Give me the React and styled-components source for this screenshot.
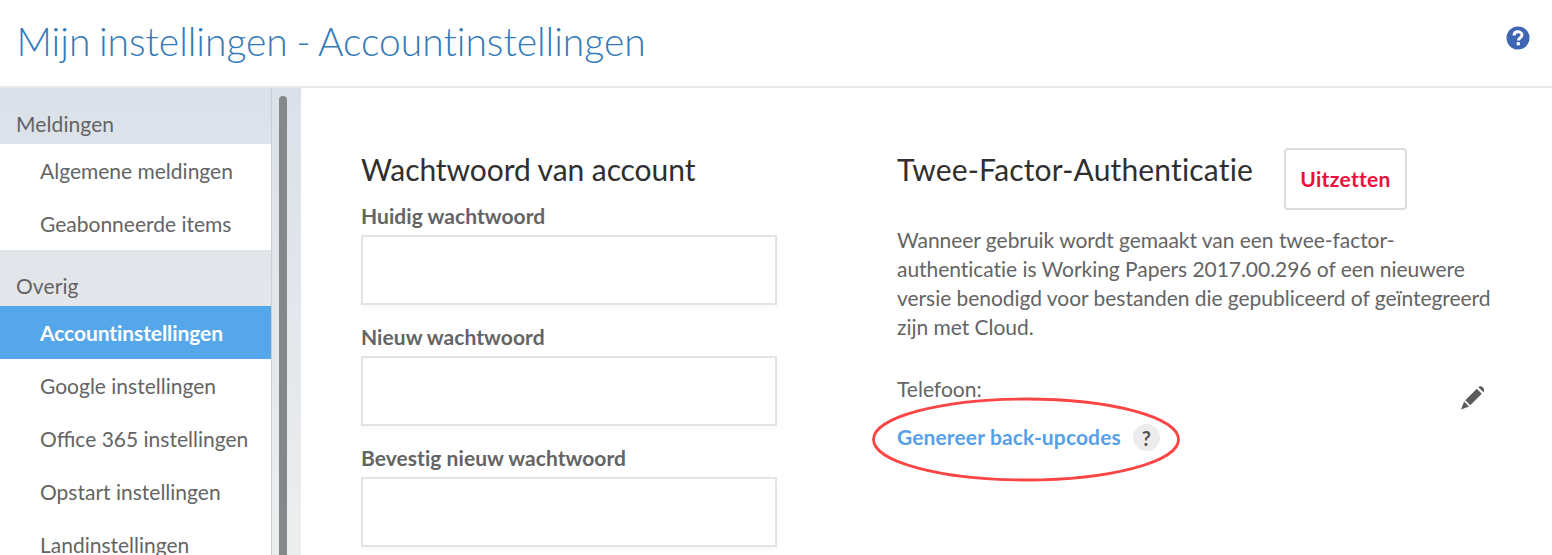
import React from "react";
import styled, { createGlobalStyle } from "styled-components";

const GlobalStyle = createGlobalStyle`
  * { box-sizing: border-box; }
  html, body { margin: 0; height: 100%; overflow: hidden; background: #fff; }
  body {
    font-family: Lato, "Open Sans", sans-serif;
    font-size: 21px;
    font-variant-ligatures: none;
    color: #646464;
  }
`;

const Page = styled.div`
  display: flex;
  flex-direction: column;
  height: 555px;
  overflow: hidden;
`;

const Header = styled.header`
  display: flex;
  flex: none;
  justify-content: space-between;
  align-items: flex-start;
  height: 88px;
  padding: 17px 22.5px 0 16.5px;
  border-bottom: 2px solid #e7e8e9;
`;

const Title = styled.h1`
  margin: 0;
  font-size: 39px;
  line-height: 48px;
  font-weight: 300;
  letter-spacing: -0.02px;
  word-spacing: -2px;
  color: #337ab7;
  white-space: nowrap;
`;

const HelpIcon = styled.svg`
  display: block;
  width: 24px;
  height: 24px;
  margin-top: 9px;
`;

const Body = styled.div`
  display: flex;
  flex: 1;
  min-height: 0;
`;

const Sidebar = styled.aside`
  display: flex;
  flex: none;
  width: 301px;
  overflow: hidden;
  background: linear-gradient(#dae1e9, #e4e7eb 50%, #eceeee);
`;

const Nav = styled.nav`
  width: 272px;
  flex: none;
  border-right: 1px solid #c9cfd6;
`;

const GroupTitle = styled.div`
  height: 56px;
  padding: 21px 16px 0;
  line-height: 30px;
  letter-spacing: 0.1px;
`;

const NavItem = styled.a`
  display: block;
  height: 53px;
  padding: 1px 0 0 40px;
  line-height: 51px;
  white-space: nowrap;
  background: ${(p) => (p.$active ? "#56a7e9" : "#fff")};
  color: ${(p) => (p.$active ? "#fff" : "#646464")};
  font-weight: ${(p) => (p.$active ? 700 : 400)};
  font-variant-ligatures: ${(p) => (p.$active ? "none" : "normal")};
  letter-spacing: ${(p) => (p.$active ? "-0.08px" : "0")};
`;

const ScrollThumb = styled.div`
  width: 8px;
  height: 600px;
  margin: 8px 0 0 7px;
  border-radius: 4px;
  background: #85888a;
`;

const Main = styled.main`
  display: flex;
  flex: 1;
  padding: 60px 0 0 60px;
`;

const PasswordForm = styled.section`
  width: 416px;
  margin-right: 120px;
  flex: none;
`;

const SectionTitle = styled.h2`
  margin: 0;
  font-size: 30px;
  line-height: 42px;
  font-weight: 400;
  letter-spacing: ${(p) => p.$tracking};
  color: #2f2f2f;
  white-space: nowrap;
`;

const Field = styled.label`
  display: block;
  height: 121px;
  font-weight: 700;
  letter-spacing: 0.05px;
`;

const FieldLabel = styled.span`
  display: block;
  height: 35px;
  line-height: 32px;
`;

const Input = styled.input`
  display: block;
  width: 416px;
  height: 70px;
  padding: 0 16px;
  border: 2px solid #e3e3e3;
  background: #fff;
  box-shadow: 0 3px 5px rgba(0, 0, 0, 0.03);
  font: inherit;
`;

const FieldList = styled.div`
  padding-top: 10px;
`;

const TwoFactor = styled.section`
  width: 600px;
  flex: none;
`;

const TitleRow = styled.div`
  display: flex;
  align-items: flex-start;
  justify-content: space-between;
  width: 510px;
`;

const OffButton = styled.button`
  width: 123px;
  height: 62px;
  padding: 0 0 2px;
  border: 2px solid #dcdcdc;
  border-radius: 4px;
  background: #fff;
  color: #ec0f3c;
  font: 700 21px Lato, sans-serif;
  letter-spacing: 0.3px;
`;

const Description = styled.p`
  margin: 15px 0 0;
  line-height: 29px;
  letter-spacing: -0.04px;
  white-space: nowrap;
`;

const PhoneRow = styled.div`
  display: flex;
  justify-content: space-between;
  margin-top: 33px;
  padding-right: 10px;
  line-height: 29px;
`;

const PencilIcon = styled.svg`
  display: block;
  width: 28px;
  height: 28px;
  margin-top: 10px;
`;

const BackupRow = styled.div`
  position: relative;
  display: flex;
  align-items: center;
  gap: 12px;
  height: 28px;
  margin-top: 11px;
`;

const BackupLink = styled.a`
  color: #56a0e8;
  font-weight: 700;
  line-height: 28px;
  letter-spacing: 0.12px;
  white-space: nowrap;
`;

const Hint = styled.span`
  width: 27px;
  height: 27px;
  border-radius: 50%;
  background: #ececec;
  color: #555;
  font-weight: 700;
  font-size: 20px;
  line-height: 28px;
  text-align: center;
`;

const Highlight = styled.svg`
  position: absolute;
  left: -26px;
  top: -28px;
  width: 312px;
  height: 88px;
  pointer-events: none;
`;

const groups = [
  { title: "Meldingen", items: ["Algemene meldingen", "Geabonneerde items"] },
  {
    title: "Overig",
    items: [
      "Accountinstellingen",
      "Google instellingen",
      "Office 365 instellingen",
      "Opstart instellingen",
      "Landinstellingen",
    ],
  },
];

const fields = ["Huidig wachtwoord", "Nieuw wachtwoord", "Bevestig nieuw wachtwoord"];

export default function App() {
  return (
    <Page>
      <GlobalStyle />
      <Header>
        <Title>Mijn instellingen - Accountinstellingen</Title>
        <HelpIcon viewBox="0 0 24 24" aria-label="Help">
          <circle cx="12" cy="12" r="11.5" fill="#3f66b3" />
          <path d="M8 9.4C8 4.6 16 4.7 16 9c0 2.8-3.7 2.9-3.7 5.6" fill="none" stroke="#fff" strokeWidth="2.9" />
          <rect x="10.7" y="16.2" width="3.2" height="3.1" fill="#fff" />
        </HelpIcon>
      </Header>
      <Body>
        <Sidebar>
          <Nav>
            {groups.map((g) => (
              <React.Fragment key={g.title}>
                <GroupTitle>{g.title}</GroupTitle>
                {g.items.map((item) => (
                  <NavItem key={item} $active={item === "Accountinstellingen"}>
                    {item}
                  </NavItem>
                ))}
              </React.Fragment>
            ))}
          </Nav>
          <ScrollThumb />
        </Sidebar>
        <Main>
          <PasswordForm>
            <SectionTitle $tracking="-0.07px">Wachtwoord van account</SectionTitle>
            <FieldList>
              {fields.map((f) => (
                <Field key={f}>
                  <FieldLabel>{f}</FieldLabel>
                  <Input type="password" />
                </Field>
              ))}
            </FieldList>
          </PasswordForm>
          <TwoFactor>
            <TitleRow>
              <SectionTitle $tracking="0.17px">Twee-Factor-Authenticatie</SectionTitle>
              <OffButton>Uitzetten</OffButton>
            </TitleRow>
            <Description>
              Wanneer gebruik wordt gemaakt van een twee-factor-
              <br />
              authenticatie is Working Papers 2017.00.296 of een nieuwere
              <br />
              versie benodigd voor bestanden die gepubliceerd of geïntegreerd
              <br />
              zijn met Cloud.
            </Description>
            <PhoneRow>
              <span>Telefoon:</span>
              <PencilIcon viewBox="0 0 28 28" aria-label="Bewerken">
                <path d="M2 25.5l3.1-8.1 5 5zM6.3 16.2L17.8 4.8l5 5-11.5 11.4zM19.4 3.2c2.8-2.8 7.6 2 5 5z" fill="#5c5c5c" />
              </PencilIcon>
            </PhoneRow>
            <BackupRow>
              <BackupLink>Genereer back-upcodes</BackupLink>
              <Hint>?</Hint>
              <Highlight viewBox="0 0 312 88">
                <ellipse cx="155" cy="44.5" rx="152.5" ry="40.5" fill="none" stroke="#fb4444" strokeWidth="2.8" />
              </Highlight>
            </BackupRow>
          </TwoFactor>
        </Main>
      </Body>
    </Page>
  );
}
